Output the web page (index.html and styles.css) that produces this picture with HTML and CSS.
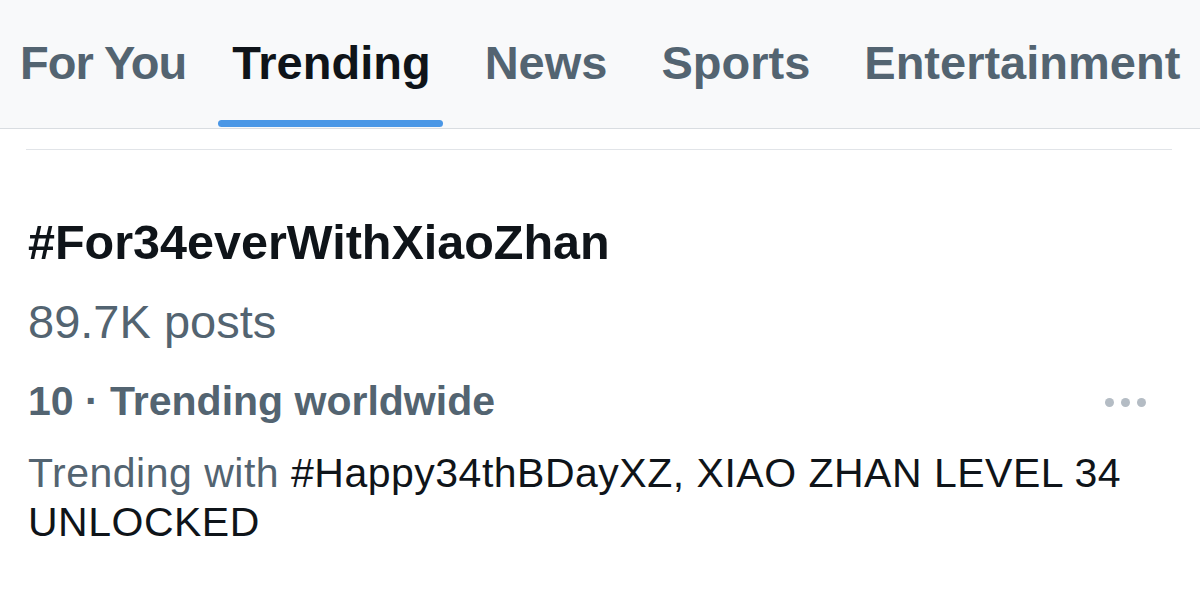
FILE: index.html
```html
<!DOCTYPE html>
<html lang="en">
<head>
<meta charset="utf-8">
<title>Trending</title>
<link rel="stylesheet" href="styles.css">
</head>
<body>
<div class="page">
  <nav class="tabs">
    <div class="tab">For You</div>
    <div class="tab active">Trending</div>
    <div class="tab">News</div>
    <div class="tab">Sports</div>
    <div class="tab">Entertainment</div>
  </nav>
  <div class="divider"></div>
  <section class="trend">
    <div class="trend-title">#For34everWithXiaoZhan</div>
    <div class="trend-count">89.7K posts</div>
    <div class="trend-meta">
      <span class="meta-text">10 · Trending worldwide</span>
      <span class="more"><i></i><i></i><i></i></span>
    </div>
    <p class="trend-context"><span class="muted">Trending with</span> #Happy34thBDayXZ, XIAO ZHAN LEVEL 34 UNLOCKED</p>
  </section>
</div>
</body>
</html>
```

FILE: styles.css
```css
html, body {
  margin: 0;
  padding: 0;
  background: #ffffff;
}

.page {
  width: 1200px;
  height: 606px;
  overflow: hidden;
  font-family: "Liberation Sans", Arial, sans-serif;
  color: #0f1419;
}

.tabs {
  display: flex;
  height: 129px;
  padding-left: 20px;
  background: #f8f9fa;
  border-bottom: 1px solid #d9dde1;
  box-sizing: border-box;
}

.tab {
  position: relative;
  padding-top: 35px;
  margin-right: 54px;
  font-size: 47px;
  line-height: 56px;
  font-weight: 700;
  color: #536471;
  white-space: nowrap;
}

.tab:first-child {
  letter-spacing: -1px;
  margin-right: 46px;
}

.tab.active {
  color: #0f1419;
}

.tab.active::after {
  content: "";
  position: absolute;
  left: -14px;
  right: -12px;
  bottom: 1px;
  height: 7px;
  border-radius: 4px;
  background: #4a97e6;
}

.divider {
  height: 1px;
  margin: 20px 28px 0 26px;
  background: #e1e4e8;
}

.trend {
  padding-left: 28px;
  padding-right: 54px;
}

.trend-title {
  margin-top: 64px;
  font-size: 48.5px;
  line-height: 56px;
  font-weight: 700;
  color: #0f1419;
}

.trend-count {
  margin-top: 24px;
  font-size: 47px;
  line-height: 56px;
  color: #536471;
}

.trend-meta {
  margin-top: 26px;
  display: flex;
  justify-content: space-between;
  align-items: center;
  font-size: 41px;
  line-height: 50px;
  font-weight: 700;
  color: #536471;
}

.more {
  display: flex;
  gap: 7px;
  padding-top: 2px;
}

.more i {
  width: 9px;
  height: 9px;
  border-radius: 50%;
  background: #b4bcc4;
}

.trend-context {
  margin: 23px 0 0;
  font-size: 41px;
  line-height: 49px;
  letter-spacing: 0.5px;
  color: #0f1419;
}

.muted {
  color: #536471;
}
```
